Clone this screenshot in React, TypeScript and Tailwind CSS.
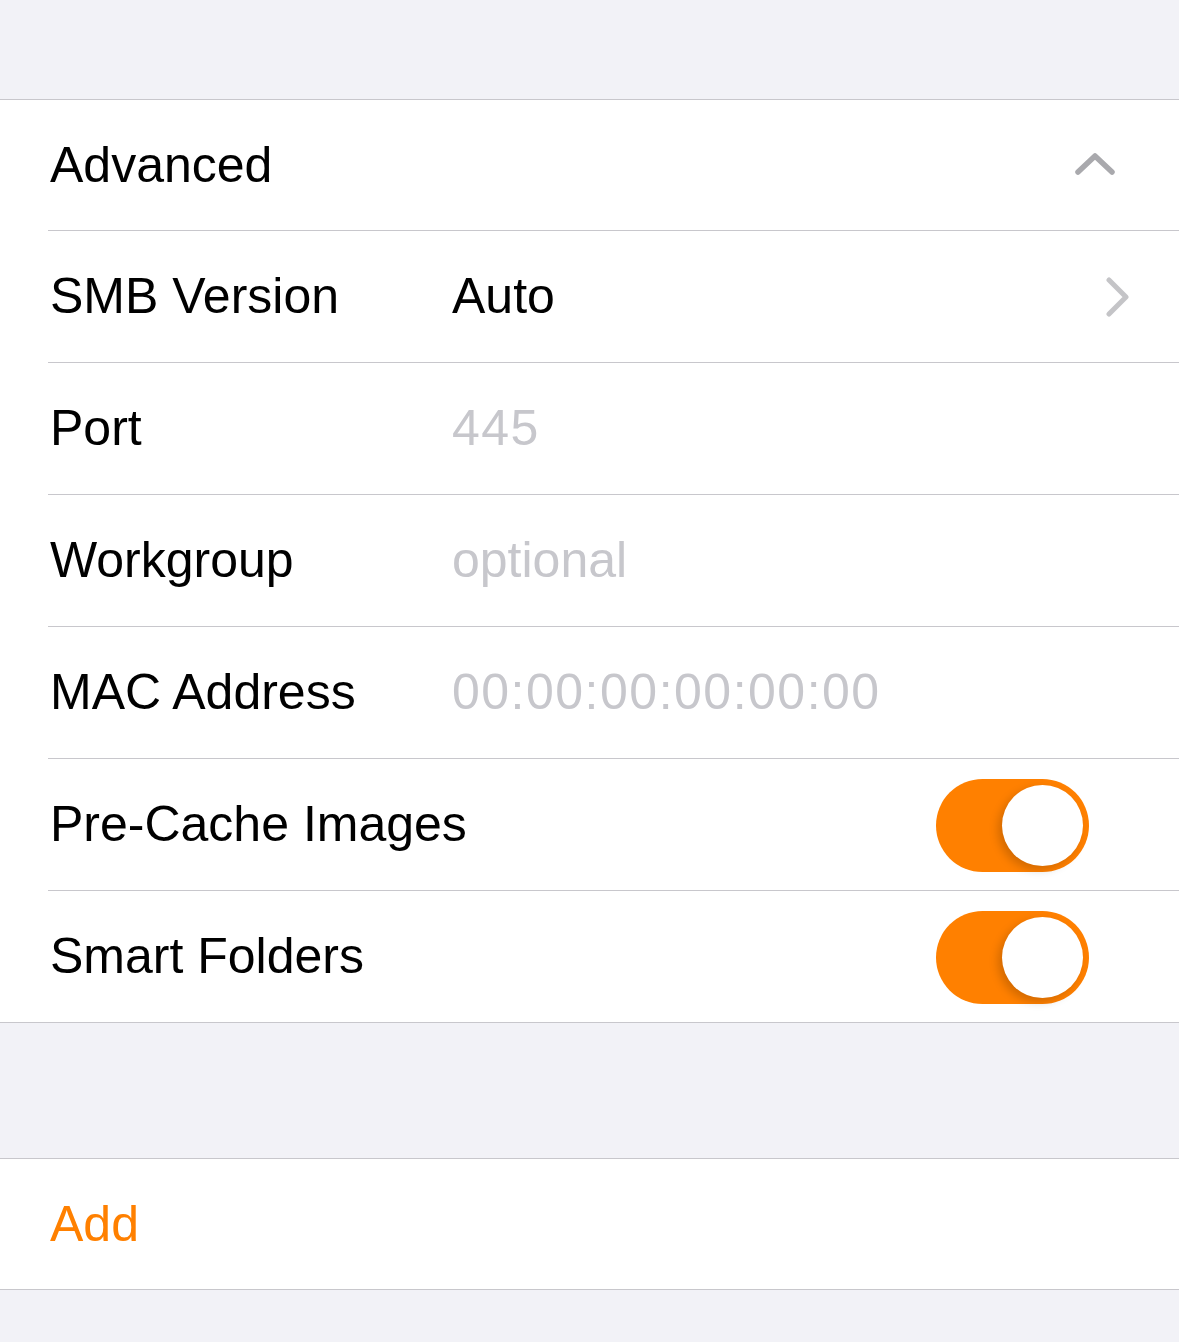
import React from "react";

const font = { fontFamily: '"Liberation Sans", Arial, sans-serif' };

function Toggle() {
  return (
    <div className="mr-[90px] mt-[2px] flex h-[93px] w-[153px] shrink-0 items-center justify-end rounded-full bg-[#ff8000] p-[6px]">
      <div className="h-[81px] w-[81px] rounded-full bg-white shadow-[-4px_4px_10px_rgba(0,0,0,0.18)]" />
    </div>
  );
}

function Row({ label, value, muted, numeric, right, last }: { label: string; value?: string; muted?: boolean; numeric?: boolean; right?: React.ReactNode; last?: boolean }) {
  return (
    <div className="pl-[48px]">
      <div className={`flex items-center ${last ? "h-[131px]" : "h-[132px] border-b border-[#c8c7cc]"}`}>
        {value !== undefined ? (
          <>
            <div className="w-[404px] shrink-0 whitespace-nowrap pl-[2px] text-[50px] text-black">{label}</div>
            <div className={`flex-1 whitespace-nowrap text-[50px] ${muted ? "text-[#c7c7cc]" : "text-black"} ${numeric ? "tracking-[1.5px]" : ""}`}>{value}</div>
          </>
        ) : (
          <div className="flex-1 whitespace-nowrap pl-[2px] text-[50px] text-black">{label}</div>
        )}
        {right}
      </div>
    </div>
  );
}

export default function App() {
  return (
    <div className="h-[1342px] w-[1179px] overflow-hidden bg-[#f2f2f7]" style={font}>
      <div className="h-[99px]" />
      <div className="border-y border-[#c8c7cc] bg-white">
        <div className="pl-[48px]">
          <div className="flex h-[131px] items-center border-b border-[#c8c7cc]">
            <div className="flex-1 pl-[2px] text-[50px] text-black">Advanced</div>
            <svg width="40" height="24" viewBox="0 0 40 24" className="mr-[64px] mb-[2px]">
              <path d="M3 20 L20 4 L37 20" fill="none" stroke="#a9a9ad" strokeWidth="5.5" strokeLinecap="round" strokeLinejoin="round" />
            </svg>
          </div>
        </div>
        <Row
          label="SMB Version"
          value="Auto"
          right={
            <svg width="26" height="40" viewBox="0 0 26 40" className="mr-[48px]">
              <path d="M4 3 L21 20 L4 37" fill="none" stroke="#c4c4c7" strokeWidth="5" strokeLinecap="round" strokeLinejoin="round" />
            </svg>
          }
        />
        <Row label="Port" value="445" muted numeric />
        <Row label="Workgroup" value="optional" muted />
        <Row label="MAC Address" value="00:00:00:00:00:00" muted numeric />
        <Row label="Pre-Cache Images" right={<Toggle />} />
        <Row label="Smart Folders" right={<Toggle />} last />
      </div>
      <div className="h-[135px]" />
      <div className="border-y border-[#c8c7cc] bg-white">
        <div className="flex h-[130px] items-center pl-[50px] text-[50px] text-[#ff8000]">Add</div>
      </div>
    </div>
  );
}
